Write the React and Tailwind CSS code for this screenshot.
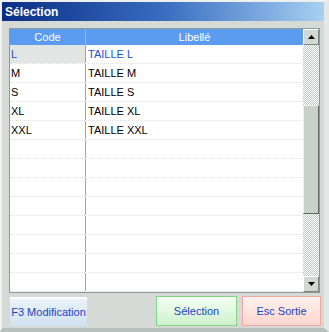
const ROWS = [
  { code: 'L', label: 'TAILLE L', selected: true },
  { code: 'M', label: 'TAILLE M' },
  { code: 'S', label: 'TAILLE S' },
  { code: 'XL', label: 'TAILLE XL' },
  { code: 'XXL', label: 'TAILLE XXL' },
];

const EMPTY_ROWS = 13 - ROWS.length;

function Arrow({ up }) {
  return (
    <svg width="7" height="4" viewBox="0 0 7 4">
      <path d={up ? 'M0 4 L3.5 0 L7 4 Z' : 'M0 0 L3.5 4 L7 0 Z'} fill="#000" />
    </svg>
  );
}

function Row({ code, label, selected }) {
  return (
    <div className="flex h-[19px] border-b border-dotted border-[#dde2e0]">
      <div
        className={`w-[76px] shrink-0 pl-[1px] flex items-center border-r border-[#9aa6a2] ${
          selected ? 'bg-[#e1e5e3] text-[#2453c4]' : 'text-black'
        }`}
      >
        {code}
      </div>
      <div className={`flex-1 pl-[2px] flex items-center ${selected ? 'text-[#2453c4]' : 'text-black'}`}>{label}</div>
    </div>
  );
}

export default function App() {
  return (
    <div
      className="w-[329px] h-[332px] bg-[#d5dad6] flex flex-col border-t-2 border-l-2 border-[#eef1ef] border-r-[5px] border-r-[#e3e7e5] border-b-[4px] border-b-[#b9bfbc] text-[11px]"
      style={{ fontFamily: '"Liberation Sans", Arial, sans-serif' }}
    >
      <div className="h-[19px] shrink-0 bg-gradient-to-r from-[#0b2d86] via-[#3a6cc0] to-[#a7d0f2] flex items-center pl-[3px] text-white font-bold text-[12px]">
        Sélection
      </div>

      <div className="flex-1 flex flex-col pl-[7px] pr-[1px] pt-[7px]">
        <div className="h-[265px] w-[311px] flex border border-[#8e9a96] bg-white">
          <div className="flex-1 flex flex-col">
            <div className="h-[16px] flex bg-[#5b9cf0] text-white">
              <div className="w-[76px] shrink-0 text-center border-r border-[#8fbaf4] leading-[16px]">Code</div>
              <div className="flex-1 text-center leading-[16px]">Libellé</div>
            </div>
            {ROWS.map((r) => (
              <Row key={r.code} {...r} />
            ))}
            {Array.from({ length: EMPTY_ROWS }).map((_, i) => (
              <Row key={i} code="" label="" />
            ))}
          </div>

          <div className="w-[16px] shrink-0 flex flex-col bg-[repeating-conic-gradient(#c3c9c6_0%_25%,#ffffff_0%_50%)] bg-[length:2px_2px]">
            <div className="h-[16px] shrink-0 bg-[#d3d8d5] border border-t-white border-l-white border-r-[#7d8581] border-b-[#7d8581] flex items-center justify-center">
              <Arrow up />
            </div>
            <div className="h-[60px] shrink-0" />
            <div className="h-[109px] shrink-0 bg-[#c9d0cb] border border-t-[#eef1ef] border-l-[#eef1ef] border-r-[#5f6763] border-b-[#5f6763]" />
            <div className="flex-1" />
            <div className="h-[16px] shrink-0 bg-[#d3d8d5] border border-t-white border-l-white border-r-[#7d8581] border-b-[#7d8581] flex items-center justify-center">
              <Arrow />
            </div>
          </div>
        </div>

        <div className="flex items-center mt-[3px] h-[30px]">
          <button className="ml-[1px] w-[77px] h-[29px] bg-gradient-to-b from-[#e9f3fa] to-[#cfe2ef] border-t-2 border-t-white text-[#2142c4] text-[11px]">
            F3 Modification
          </button>
          <button className="ml-[69px] w-[81px] h-[30px] bg-gradient-to-b from-[#f4fff4] to-[#cdf1cd] border border-[#86d486] text-[#2142c4] text-[11px]">
            Sélection
          </button>
          <button className="ml-[5px] w-[79px] h-[30px] bg-gradient-to-b from-[#fff2ee] to-[#fcd6cc] border border-[#f2a8a0] text-[#2142c4] text-[11px]">
            Esc Sortie
          </button>
        </div>
      </div>
    </div>
  );
}
